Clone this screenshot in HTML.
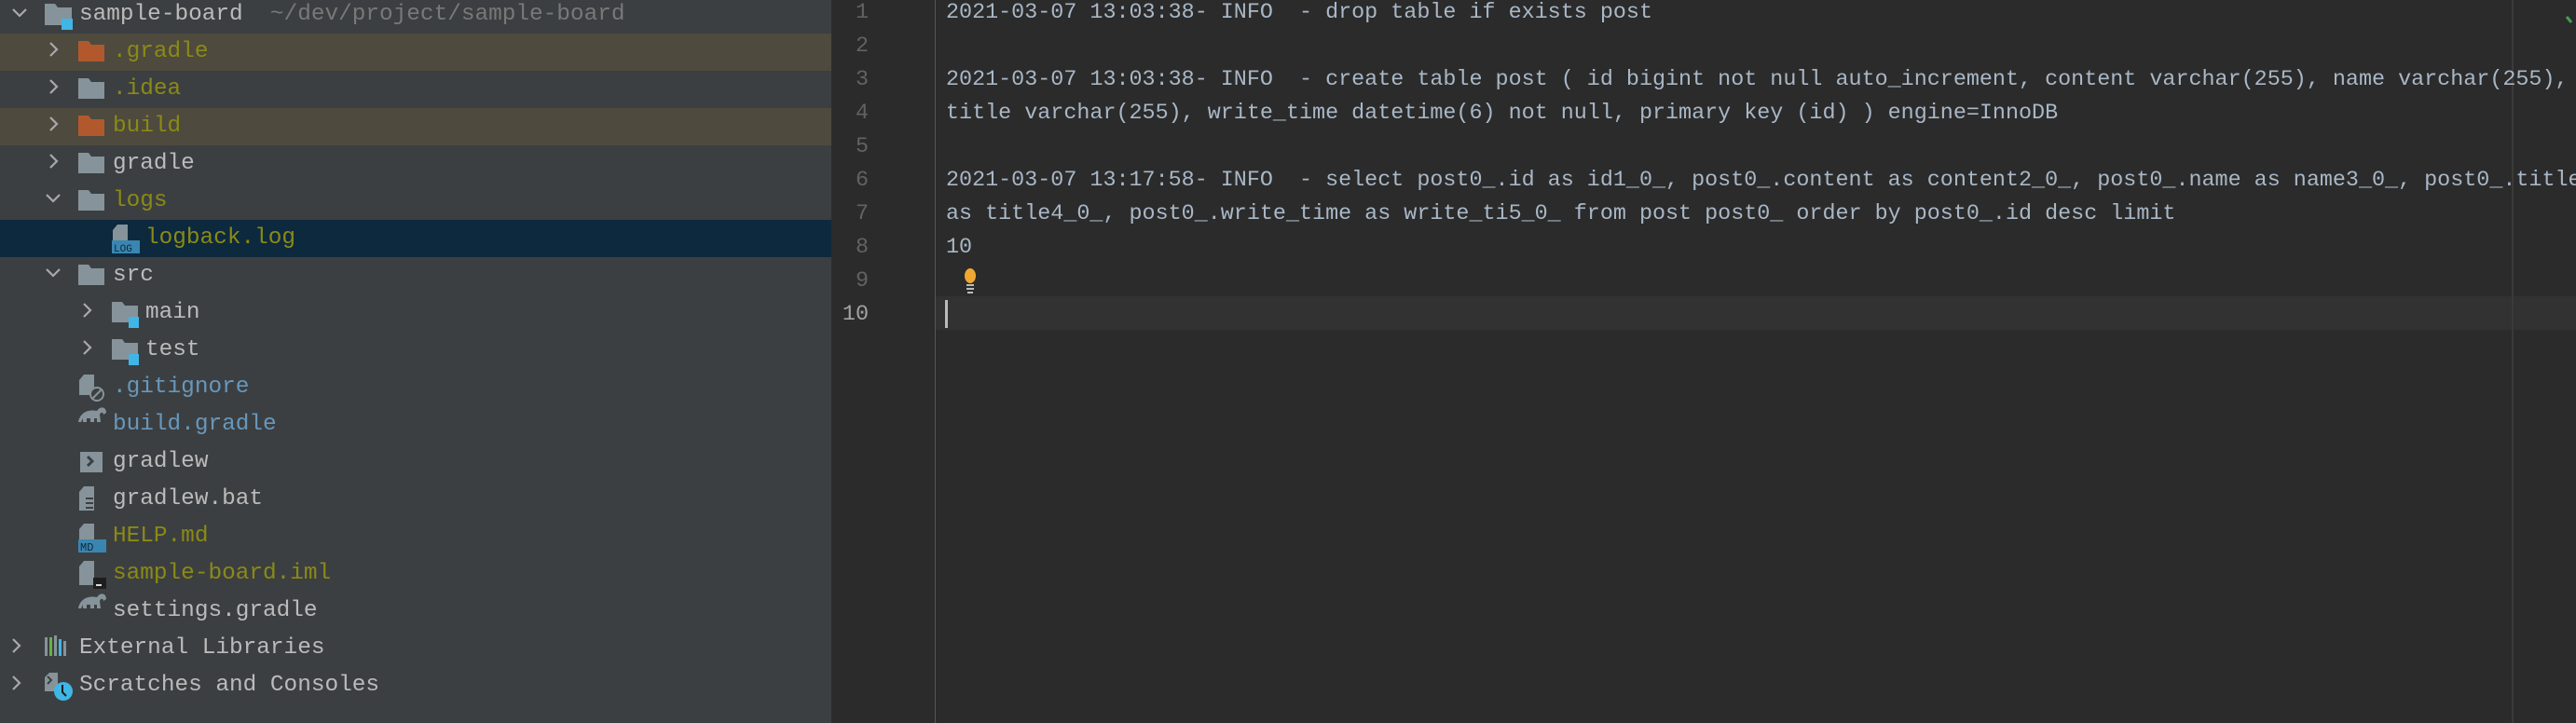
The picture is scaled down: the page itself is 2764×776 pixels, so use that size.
<!DOCTYPE html>
<html><head><meta charset="utf-8">
<style>
*{margin:0;padding:0;box-sizing:border-box}
body{width:2764px;height:776px;overflow:hidden;background:#2b2b2b;position:relative;font-family:"Liberation Mono",monospace}
#side{position:absolute;left:0;top:0;width:892px;height:776px;background:#3c3f41}
.row{position:absolute;left:0;width:892px;height:40px}
.hl{background:#4e4a3e}
.sel{background:#0d293e}
.t{position:absolute;font-size:24.4px;line-height:40px;top:0;white-space:pre;color:#bbbbbb}
.ol{color:#8a8a16}
.bl{color:#6897bb}
#gut{position:absolute;left:892px;top:0;width:112px;height:776px;background:#2b2b2b;border-right:1px solid #555}
.ln{position:absolute;width:60px;text-align:right;font-size:23.4px;line-height:36px;color:#606366;font-family:"Liberation Mono",monospace}
.cl{position:absolute;left:1004px;top:318px;width:1760px;height:36px;background:#323232}
.code{position:absolute;left:1015px;font-size:23.4px;line-height:36px;color:#a9b7c6;white-space:pre}
</style></head><body>
<div id="side">
<div class="row hl" style="top:36px"></div>
<div class="row hl" style="top:116px"></div>
<div class="row sel" style="top:236px"></div>
</div>
<svg width="892" height="776" style="position:absolute;left:0;top:0">
<g fill="none" stroke="#a8a8a8" stroke-width="2.2">
<path d="M14 10l7 7 7-7"/>
<path d="M54 46l7 7-7 7"/><path d="M54 86l7 7-7 7"/><path d="M54 126l7 7-7 7"/><path d="M54 166l7 7-7 7"/>
<path d="M50 209l7 7 7-7"/><path d="M50 289l7 7 7-7"/>
<path d="M90 326l7 7-7 7"/><path d="M90 366l7 7-7 7"/>
<path d="M14 686l7 7-7 7"/><path d="M14 726l7 7-7 7"/>
</g>
<g fill="#87939a">
<path d="M48 4h11l3 4h15v19H48z"/>
<path d="M84 44h11l3 4h14v18H84z" fill="#b2582d"/>
<path d="M84 84h11l3 4h14v18H84z"/>
<path d="M84 124h11l3 4h14v18H84z" fill="#b2582d"/>
<path d="M84 164h11l3 4h14v18H84z"/>
<path d="M84 204h11l3 4h14v18H84z"/>
<path d="M84 284h11l3 4h14v18H84z"/>
<path d="M120 324h11l3 4h14v18h-28z"/>
<path d="M120 364h11l3 4h14v18h-28z"/>
<path d="M126 241h11v22h-16v-16z"/>
<path d="M90 402h11v22h-16v-16z"/>
<path d="M90 522h11v26h-16v-20z"/>
<path d="M90 562h11v18h-16v-12z"/>
<path d="M90 602h11v26h-16v-20z"/>
<rect x="86" y="485" width="24" height="22"/>
<path d="M84 453c2-10 10-14 20-12 4-6 10-4 10 2l-3 2c0-3-3-3-4 0l1 8h-4v-4h-3v4h-4v-4h-4v4h-4v-4l-2 4z"/>
<path d="M84 653c2-10 10-14 20-12 4-6 10-4 10 2l-3 2c0-3-3-3-4 0l1 8h-4v-4h-3v4h-4v-4h-4v4h-4v-4l-2 4z"/>
<path d="M53 722h9v20h-14v-15z"/>
</g>
<rect x="66" y="20" width="12" height="12" fill="#3fb6e5"/>
<rect x="138" y="340" width="11" height="12" fill="#3fb6e5"/>
<rect x="138" y="380" width="11" height="12" fill="#3fb6e5"/>
<rect x="120" y="258" width="30" height="14" fill="#3a86b0"/>
<text x="122" y="270" font-size="11" fill="#0d293e" font-family="Liberation Mono">LOG</text>
<rect x="84" y="579" width="30" height="14" fill="#3a86b0"/>
<text x="86" y="591" font-size="12" fill="#0d293e" font-family="Liberation Mono">MD</text>
<rect x="100" y="620" width="14" height="12" fill="#1e1e1e"/><rect x="103" y="627" width="6" height="2" fill="#ddd"/>
<circle cx="104" cy="423" r="7" fill="#3c3f41" stroke="#87939a" stroke-width="2"/><path d="M99 428l10-10" stroke="#87939a" stroke-width="2"/>
<path d="M94 490l5 5-5 5" stroke="#3c3f41" stroke-width="3" fill="none"/>
<g fill="#3c3f41"><rect x="92" y="534" width="8" height="2"/><rect x="92" y="539" width="8" height="2"/><rect x="92" y="544" width="8" height="2"/></g>
<rect x="48" y="684" width="3" height="20" fill="#87939a"/><rect x="53" y="684" width="3" height="20" fill="#62b543"/><rect x="58" y="682" width="3" height="22" fill="#87939a"/><rect x="63" y="686" width="3" height="18" fill="#3fb6e5"/><rect x="68" y="688" width="3" height="16" fill="#87939a"/>
<path d="M51 726l4 4-4 4" stroke="#3c3f41" stroke-width="2" fill="none"/>
<circle cx="68" cy="742" r="10" fill="#3fb6e5"/><path d="M67 735v8l4 4" stroke="#1e1e1e" stroke-width="2" fill="none"/>
</svg>
<div class="t" style="left:85px;top:-4px">sample-board  <span style="color:#787878">~/dev/project/sample-board</span></div>
<div class="t ol" style="left:121px;top:36px">.gradle</div>
<div class="t ol" style="left:121px;top:76px">.idea</div>
<div class="t ol" style="left:121px;top:116px">build</div>
<div class="t" style="left:121px;top:156px">gradle</div>
<div class="t ol" style="left:121px;top:196px">logs</div>
<div class="t ol" style="left:156px;top:236px">logback.log</div>
<div class="t" style="left:121px;top:276px">src</div>
<div class="t" style="left:156px;top:316px">main</div>
<div class="t" style="left:156px;top:356px">test</div>
<div class="t bl" style="left:121px;top:396px">.gitignore</div>
<div class="t bl" style="left:121px;top:436px">build.gradle</div>
<div class="t" style="left:121px;top:476px">gradlew</div>
<div class="t" style="left:121px;top:516px">gradlew.bat</div>
<div class="t ol" style="left:121px;top:556px">HELP.md</div>
<div class="t ol" style="left:121px;top:596px">sample-board.iml</div>
<div class="t" style="left:121px;top:636px">settings.gradle</div>
<div class="t" style="left:85px;top:676px">External Libraries</div>
<div class="t" style="left:85px;top:716px">Scratches and Consoles</div>

<div id="gut"></div>
<div class="cl"></div>
<div style="position:absolute;left:2695px;top:0;width:2px;height:776px;background:#3a3a3a"></div>
<svg width="20" height="20" style="position:absolute;left:2752px;top:12px"><path d="M2 6l5 6" stroke="#499c54" stroke-width="3"/></svg>
<div style="position:absolute;left:872px;top:0;width:60px">
<div class="ln" style="top:-4px;left:0">1</div>
<div class="ln" style="top:32px;left:0">2</div>
<div class="ln" style="top:68px;left:0">3</div>
<div class="ln" style="top:104px;left:0">4</div>
<div class="ln" style="top:140px;left:0">5</div>
<div class="ln" style="top:176px;left:0">6</div>
<div class="ln" style="top:212px;left:0">7</div>
<div class="ln" style="top:248px;left:0">8</div>
<div class="ln" style="top:284px;left:0">9</div>
<div class="ln" style="top:320px;left:0;color:#a4a3a3">10</div>
</div>
<div class="code" style="top:-4px">2021-03-07 13:03:38- INFO  - drop table if exists post</div>
<div class="code" style="top:68px">2021-03-07 13:03:38- INFO  - create table post ( id bigint not null auto_increment, content varchar(255), name varchar(255),</div>
<div class="code" style="top:104px">title varchar(255), write_time datetime(6) not null, primary key (id) ) engine=InnoDB</div>
<div class="code" style="top:176px">2021-03-07 13:17:58- INFO  - select post0_.id as id1_0_, post0_.content as content2_0_, post0_.name as name3_0_, post0_.title</div>
<div class="code" style="top:212px">as title4_0_, post0_.write_time as write_ti5_0_ from post post0_ order by post0_.id desc limit</div>
<div class="code" style="top:248px">10</div>
<svg width="20" height="30" style="position:absolute;left:1031px;top:287px"><ellipse cx="10" cy="9" rx="6" ry="8" fill="#f0a732"/><rect x="6" y="18" width="8" height="2" fill="#bbb"/><rect x="6" y="22" width="8" height="2" fill="#bbb"/><rect x="7" y="26" width="6" height="2" fill="#bbb"/></svg>
<div style="position:absolute;left:1014px;top:322px;width:3px;height:30px;background:#bbbbbb"></div>
</body></html>
